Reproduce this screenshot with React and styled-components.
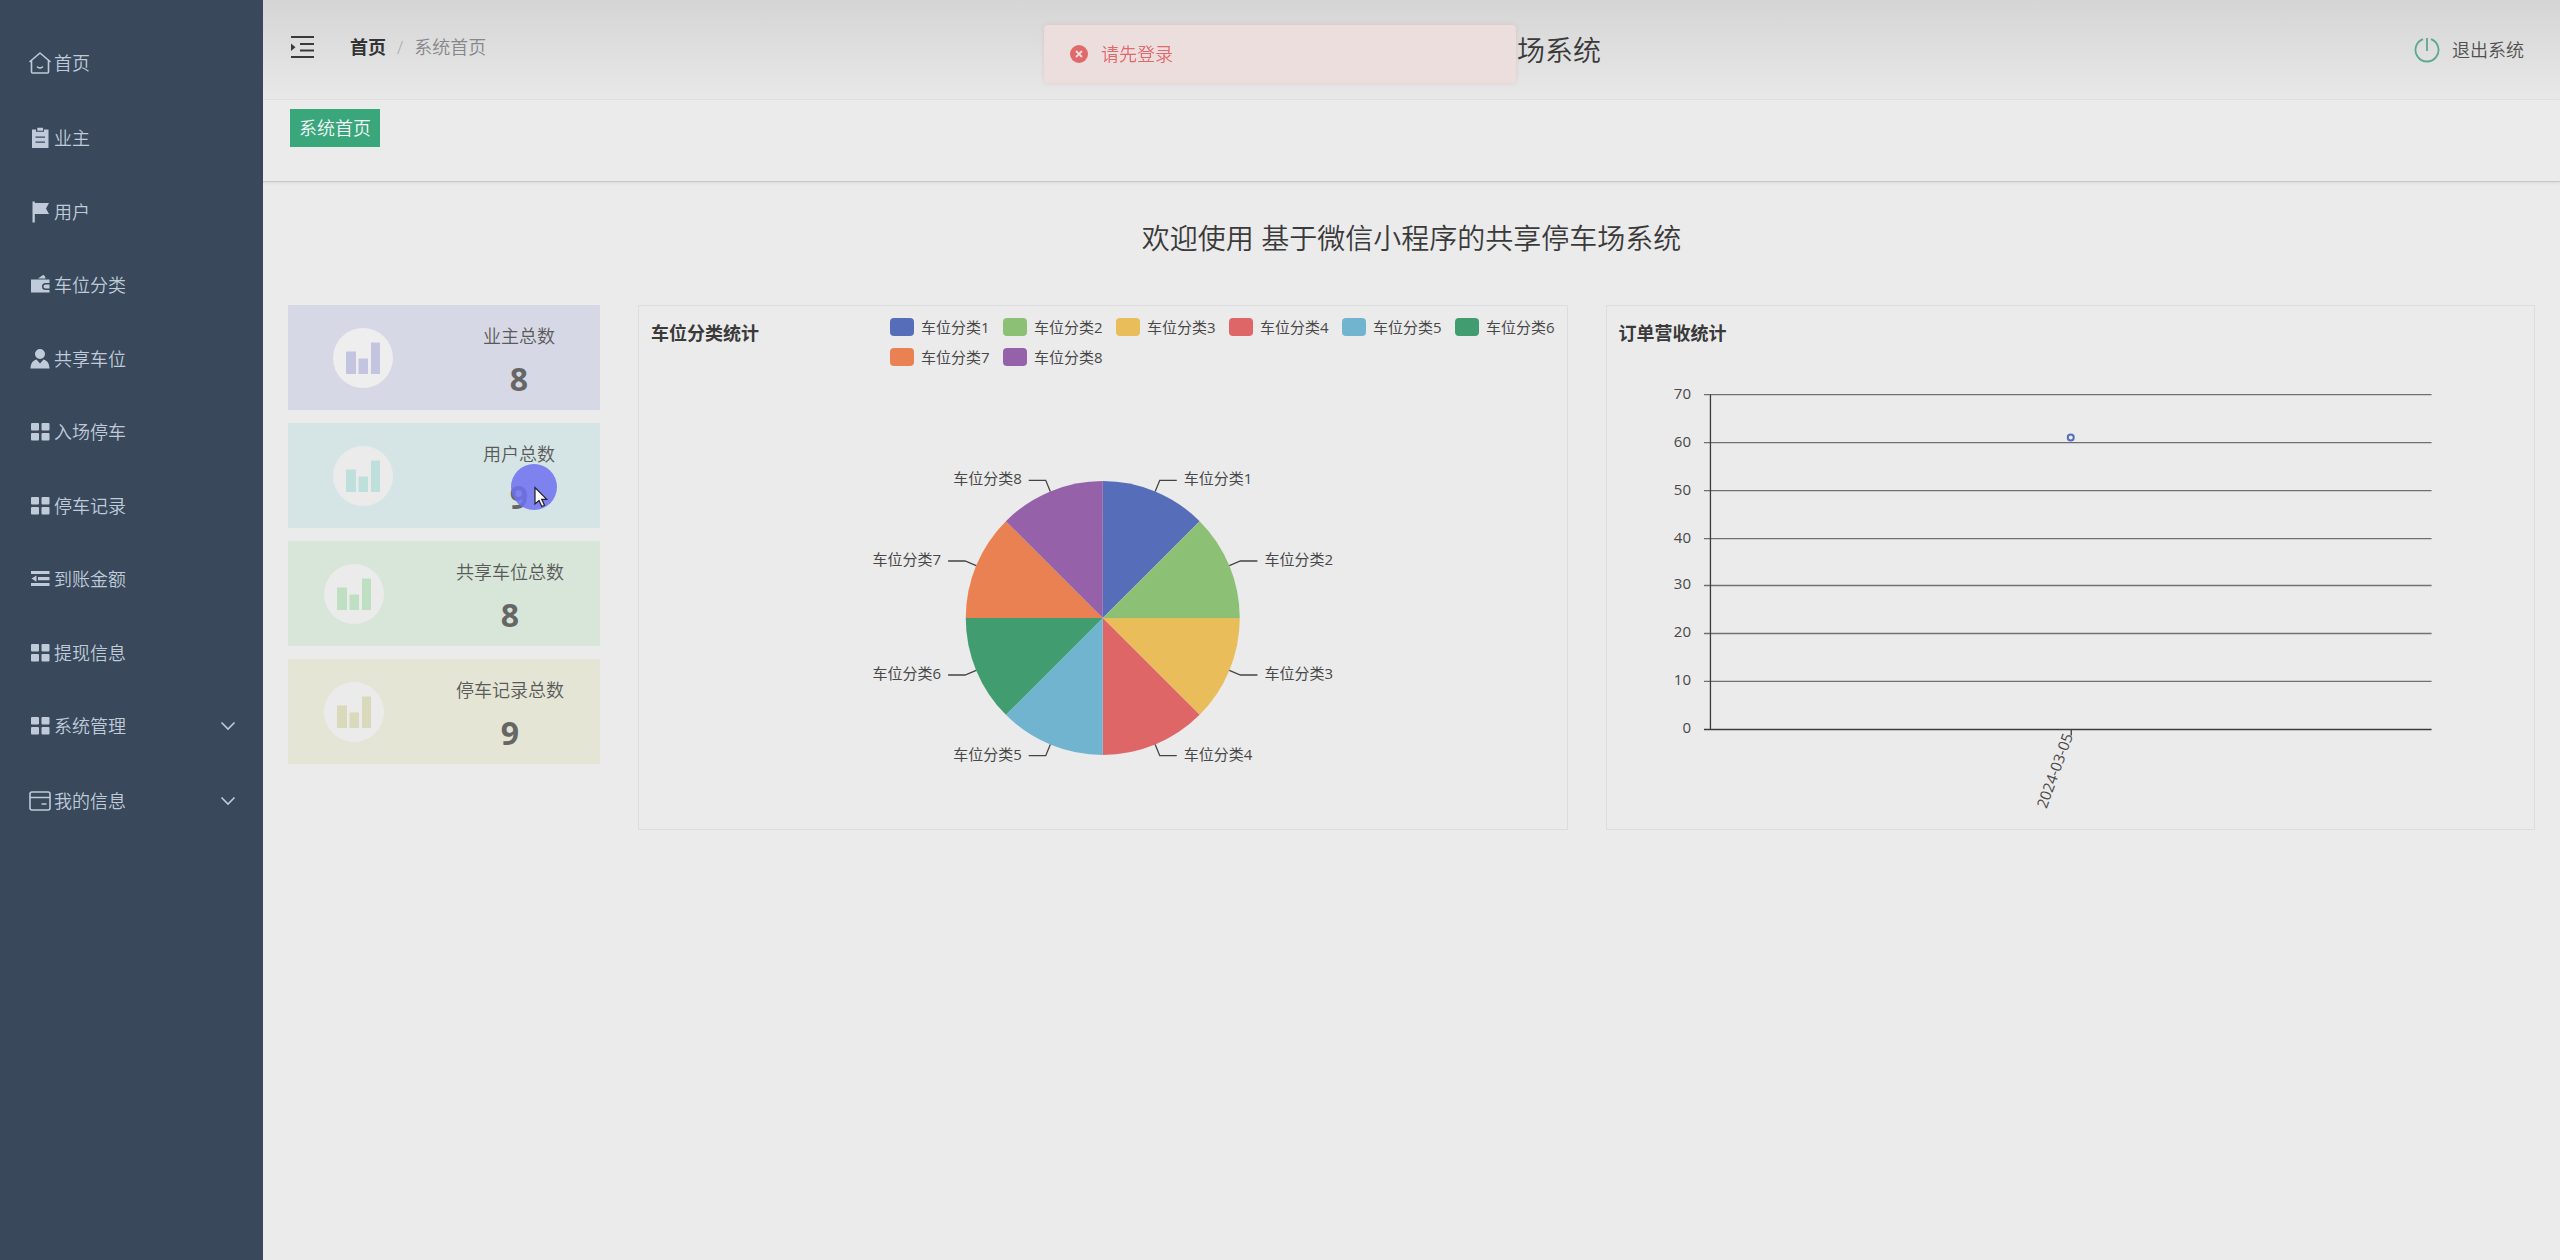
import React from "react";
import styled, { createGlobalStyle } from "styled-components";

const GlobalStyle = createGlobalStyle`
  * { box-sizing: border-box; }
  body {
    margin: 0;
    background: #ebebeb;
    color: #3a3a3a;
    font-family: "Open Sans", "Noto Sans CJK SC", sans-serif;
    font-size: 18px;
    line-height: 24px;
    font-weight: 350;
  }
  button { font: inherit; border: 0; background: none; padding: 0; cursor: pointer; }
  a { color: inherit; text-decoration: none; }
  h1, h2, p, ul, ol { margin: 0; padding: 0; font-weight: inherit; }
  ul, ol { list-style: none; }
`;

const Layout = styled.div`
  display: flex;
  min-height: 100vh;
`;

const Sidebar = styled.nav`
  flex: none;
  width: 263px;
  padding-top: 26px;
  background: #39485b;
  color: #bfcbd9;
`;

const MenuItem = styled.li`
  &:nth-child(even) { padding-bottom: 1px; }
  &:first-child, &:nth-last-child(2) { padding-bottom: 2px; }
`;

const MenuLink = styled.a`
  display: flex;
  align-items: center;
  gap: 3px;
  width: 100%;
  height: 73px;
  padding: 0 27px 0 29px;
  color: inherit;
  white-space: nowrap;
`;

const MenuIcon = styled.svg`
  flex: none;
  width: 22px;
  height: 22px;
`;

const Chevron = styled.svg`
  width: 16px;
  height: 16px;
  margin-left: auto;
`;

const Main = styled.main`
  flex: 1;
  min-width: 0;
`;

const Header = styled.header`
  display: flex;
  align-items: center;
  height: 100px;
  padding: 0 36px 0 27px;
  background: linear-gradient(#d5d5d5, #e8e8e8);
  border-bottom: 1px solid #e2e2e2;
`;

const HeaderSide = styled.div`
  flex: 1;
  display: flex;
  align-items: center;
  justify-content: ${(p) => (p.$end ? "flex-end" : "flex-start")};
  padding-bottom: ${(p) => (p.$end ? "0" : "6px")};
`;

const FoldButton = styled.button`
  display: flex;
  margin-right: 36px;
  color: #3a3a3a;
`;

const Crumbs = styled.ol`
  display: flex;
  gap: 11px;
  color: #85878b;
`;

const Crumb = styled.li`
  color: ${(p) => (p.$sep ? "#a5a8ad" : "inherit")};
`;

const HomeCrumb = styled.a`
  color: #333436;
  font-weight: 700;
`;

const SystemTitle = styled.h1`
  margin-right: 32px;
  font-size: 28px;
  line-height: 40px;
  white-space: nowrap;
`;

const LogoutButton = styled.button`
  display: flex;
  align-items: center;
  gap: 12px;
  color: #505050;
`;

const TagBar = styled.div`
  height: 82px;
  padding: 9px 27px 0;
  border-bottom: 1px solid #c6c7c8;
  box-shadow: 0 1px 3px rgba(0, 0, 0, 0.08);
`;

const Tag = styled.button`
  height: 38px;
  padding: 0 9px;
  background: #3aa67b;
  color: #f4f8f6;
`;

const Content = styled.div`
  padding: 36px 25px;
`;

const Welcome = styled.h2`
  margin-bottom: 47px;
  font-size: 28px;
  line-height: 40px;
  text-align: center;
`;

const Board = styled.div`
  display: grid;
  grid-template-columns: 312px 1fr 1fr;
  gap: 38px;
`;

const Stats = styled.div`
  display: flex;
  flex-direction: column;
  gap: 13px;
`;

const StatCard = styled.section`
  display: flex;
  align-items: center;
  justify-content: space-around;
  height: 105px;
  background: ${(p) => p.$bg};
  color: #5a5a5a;
`;

const StatIcon = styled.svg`
  width: 60px;
  height: 60px;
`;

const StatText = styled.div`
  padding-top: 5px;
  text-align: center;
`;

const StatNumber = styled.p`
  margin-top: 13px;
  color: #666;
  font-size: 32px;
  line-height: 36px;
  font-weight: 700;
`;

const Panel = styled.section`
  height: 525px;
  border: 1px solid #dcdddf;
`;

const PanelHead = styled.div`
  display: flex;
  justify-content: space-between;
  height: 74px;
  padding: 11px 12px 0 12px;
`;

const PanelTitle = styled.h2`
  padding-top: 4px;
  font-size: 18px;
  font-weight: 700;
  white-space: nowrap;
`;

const Legend = styled.ul`
  display: grid;
  grid-template-columns: repeat(6, 100px);
  grid-auto-rows: 20px;
  gap: 10px 13px;
`;

const LegendItem = styled.li`
  display: flex;
  align-items: center;
  gap: 7px;
  color: #484848;
  font-size: 15px;
  font-weight: 400;
  line-height: 20px;
  white-space: nowrap;
`;

const Swatch = styled.span`
  width: 25px;
  height: 18px;
  border-radius: 4px;
  background: ${(p) => p.$color};
`;

const PieSpace = styled.div`
  padding-top: 82px;
`;

const Chart = styled.svg`
  display: block;
  width: 100%;
  overflow: visible;
  text { font-size: 15px; font-weight: 400; fill: #484848; }
`;

const Message = styled.div`
  position: fixed;
  z-index: 10;
  top: 25px;
  left: 50%;
  transform: translateX(-50%);
  display: flex;
  align-items: center;
  gap: 13px;
  width: 472px;
  height: 58px;
  padding: 0 26px;
  border-radius: 4px;
  background: #ebdedd;
  color: #e1696c;
  box-shadow: 0 0 4px rgba(225, 120, 120, 0.25);
`;

const Pointer = styled.svg`
  position: fixed;
  z-index: 20;
  top: 464px;
  left: 511px;
  width: 46px;
  height: 46px;
  pointer-events: none;
`;

const line = { fill: "none", stroke: "currentColor", strokeWidth: 1.6 };

const glyphs = {
  home: (
    <g {...line} strokeLinejoin="round" strokeLinecap="round">
      <path d="M2.500 8.500V20q0 1 1 1h15q1 0 1-1V8.500M1 9.500 11 1l10 8.500" />
      <path d="M8.500 15q2.500 2 5 0" />
    </g>
  ),
  clipboard: (
    <path
      fill="currentColor"
      fillRule="evenodd"
      d="M3 2.500h4v2.300h8V2.500h4.500V21H3zM6.500 9.500v1.300h9.500V9.500zM6.500 14.500v1.300h9.500v-1.300zM8.300 0.800h5.800v3H8.300z"
    />
  ),
  flag: <path fill="currentColor" d="M3.500 0.500h2.300V2H20l-3 5.500 3 5.500H5.800v8.500H3.500z" />,
  wallet: (
    <path
      fill="currentColor"
      fillRule="evenodd"
      d="M2 5.500h18.500v3.500h-4a3.500 3.500 0 0 0 0 7h4v2.500H2zM16.500 10.500h4v4h-4a2 2 0 0 1 0-4zM9 4.500l5-3.500q2 0 2.500 3.500z"
    />
  ),
  user: (
    <path
      fill="currentColor"
      d="M11 1a5 5 0 1 1 0 10 5 5 0 0 1 0-10zM7.500 11.500 11 15.500l3.500-4c4 1 5.800 4 6 9h-19c0.200-5 2-8 6-9z"
    />
  ),
  grid: (
    <g fill="currentColor">
      <rect x="2" y="2" width="8" height="7.500" rx="1" />
      <rect x="12.500" y="2" width="8" height="7.500" rx="1" />
      <rect x="2" y="12" width="8" height="7.500" rx="1" />
      <rect x="12.500" y="12" width="8" height="7.500" rx="1" />
    </g>
  ),
  fold: (
    <path
      fill="currentColor"
      d="M2 3h18.500v3H2zM9 9h11.500v3.300H9zM2 15h18.500v3H2zM2.500 10.600 7.500 7.500v6.200z"
    />
  ),
  card: (
    <g {...line}>
      <rect x="1" y="2" width="20" height="18" rx="2" />
      <path d="M1 7.500h20M12.500 14h5" />
    </g>
  ),
};

const menu = [
  { label: "首页", icon: "home" },
  { label: "业主", icon: "clipboard" },
  { label: "用户", icon: "flag" },
  { label: "车位分类", icon: "wallet" },
  { label: "共享车位", icon: "user" },
  { label: "入场停车", icon: "grid" },
  { label: "停车记录", icon: "grid" },
  { label: "到账金额", icon: "fold" },
  { label: "提现信息", icon: "grid" },
  { label: "系统管理", icon: "grid", sub: true },
  { label: "我的信息", icon: "card", sub: true },
];

const stats = [
  { label: "业主总数", value: 8, bg: "#d7d8e5", bar: "#c3c4e0", disc: "#eeeeee" },
  { label: "用户总数", value: 9, bg: "#d5e5e5", bar: "#bfdfdc", disc: "#ebebeb" },
  { label: "共享车位总数", value: 8, bg: "#d7e6d8", bar: "#bfdfc3", disc: "#ebebeb" },
  { label: "停车记录总数", value: 9, bg: "#e4e5d5", bar: "#d9dabc", disc: "#ebebeb" },
];

const categories = [
  "#566dba", "#8cc175", "#e8bd5a", "#df6667",
  "#71b4cf", "#419c70", "#ea8152", "#9562aa",
].map((color, i) => ({ color, name: `车位分类${i + 1}` }));

const R = 137;
const CX = 230;
const CY = 156;
const polar = (deg, r) => {
  const a = (deg * Math.PI) / 180;
  return [CX + r * Math.sin(a), CY - r * Math.cos(a)];
};

function PieChart() {
  return (
    <Chart height="312" viewBox="0 0 460 312" role="img" aria-label="车位分类统计">
      {categories.map(({ color, name }, i) => {
        const [x1, y1] = polar(i * 45, R);
        const [x2, y2] = polar(i * 45 + 45, R);
        const [sx, sy] = polar(i * 45 + 22.5, R);
        const [ex, ey] = polar(i * 45 + 22.5, R + 12);
        const dir = i < 4 ? 1 : -1;
        return (
          <g key={name}>
            <path d={`M${CX} ${CY}L${x1} ${y1}A${R} ${R} 0 0 1 ${x2} ${y2}Z`} fill={color} />
            <path d={`M${sx} ${sy}L${ex} ${ey}h${dir * 17}`} fill="none" stroke="#444" strokeWidth="1.300" />
            <text x={ex + dir * 24} y={ey + 4} textAnchor={dir > 0 ? "start" : "end"}>{name}</text>
          </g>
        );
      })}
    </Chart>
  );
}

const ticks = [70, 60, 50, 40, 30, 20, 10, 0];

function RevenueChart() {
  const y = (v) => Math.round(349 - (v * 335) / 70) + 0.5;
  return (
    <Chart height="440" viewBox="0 0 928 440" role="img" aria-label="订单营收统计">
      {ticks.map((v) => (
        <g key={v}>
          <line x1="97" x2="825" y1={y(v)} y2={y(v)} stroke={v ? "#707070" : "#3c3c3c"} strokeWidth={v ? 1.3 : 1.6} />
          <text x="84" y={y(v) + 4} textAnchor="end">{v}</text>
        </g>
      ))}
      <path d={`M103.5 ${y(70)}V${y(0)}M464.500 ${y(0)}v6`} stroke="#3c3c3c" strokeWidth="1.300" />
      <circle cx="464" cy={y(61)} r="3" fill="#ebebeb" stroke="#566dba" strokeWidth="2" />
      <text transform="translate(461 356) rotate(-70)" x="2" y="5" textAnchor="end">2024-03-05</text>
    </Chart>
  );
}

export default function App() {
  return (
    <>
      <GlobalStyle />
      <Layout>
        <Sidebar>
          <ul>
            {menu.map(({ label, icon, sub }) => (
              <MenuItem key={label}>
                <MenuLink as={sub ? "button" : "a"} href={sub ? undefined : "#"}>
                  <MenuIcon viewBox="0 0 22 22" aria-hidden="true">{glyphs[icon]}</MenuIcon>
                  {label}
                  {sub && (
                    <Chevron viewBox="0 0 16 16" aria-hidden="true">
                      <path {...line} d="M1.500 4.500 8 11l6.500-6.500" />
                    </Chevron>
                  )}
                </MenuLink>
              </MenuItem>
            ))}
          </ul>
        </Sidebar>
        <Main>
          <Header>
            <HeaderSide>
              <FoldButton aria-label="折叠菜单">
                <svg width="24" height="24" viewBox="0 0 24 24" aria-hidden="true">
                  <path {...line} strokeWidth="1.800" d="M1 2h23M10 9h14M10 15.500h14M1 22h23" />
                  <path d="M1 8.500 5.500 12.300 1 16z" fill="currentColor" />
                </svg>
              </FoldButton>
              <Crumbs>
                <Crumb><HomeCrumb href="#">首页</HomeCrumb></Crumb>
                <Crumb $sep aria-hidden="true">/</Crumb>
                <Crumb>系统首页</Crumb>
              </Crumbs>
            </HeaderSide>
            <SystemTitle>基于微信小程序的共享停车场系统</SystemTitle>
            <HeaderSide $end>
              <LogoutButton>
                <svg width="26" height="26" viewBox="0 0 26 26" fill="none" stroke="#5da890" strokeWidth="1.800" aria-hidden="true">
                  <path d="M9 2.200a11.500 11.500 0 1 0 8 0M13 1v13" />
                </svg>
                退出系统
              </LogoutButton>
            </HeaderSide>
          </Header>
          <TagBar><Tag>系统首页</Tag></TagBar>
          <Content>
            <Welcome>欢迎使用 基于微信小程序的共享停车场系统</Welcome>
            <Board>
              <Stats>
                {stats.map((s) => (
                  <StatCard key={s.label} $bg={s.bg}>
                    <StatIcon viewBox="0 0 60 60" aria-hidden="true">
                      <circle cx="30" cy="30" r="30" fill={s.disc} />
                      <path fill={s.bar} d="M13 23.500h10V46H13zM25.500 30.500h9.500V46h-9.500zM38 14.500h9V46h-9z" />
                    </StatIcon>
                    <StatText>
                      <p>{s.label}</p>
                      <StatNumber>{s.value}</StatNumber>
                    </StatText>
                  </StatCard>
                ))}
              </Stats>
              <Panel>
                <PanelHead>
                  <PanelTitle>车位分类统计</PanelTitle>
                  <Legend>
                    {categories.map((c) => (
                      <LegendItem key={c.name}><Swatch $color={c.color} />{c.name}</LegendItem>
                    ))}
                  </Legend>
                </PanelHead>
                <PieSpace><PieChart /></PieSpace>
              </Panel>
              <Panel>
                <PanelHead><PanelTitle>订单营收统计</PanelTitle></PanelHead>
                <RevenueChart />
              </Panel>
            </Board>
          </Content>
        </Main>
      </Layout>
      <Message role="alert">
        <svg width="18" height="18" viewBox="0 0 18 18" aria-hidden="true">
          <circle cx="9" cy="9" r="9" fill="#e1696c" />
          <path d="M6 6l6 6M12 6l-6 6" stroke="#ebdedd" strokeWidth="1.800" />
        </svg>
        请先登录
      </Message>
      <Pointer viewBox="0 0 46 46" aria-hidden="true">
        <circle cx="23" cy="23" r="23" fill="#6f71f0" fillOpacity="0.860" />
        <path d="M24 23.500v16.500l4-3.500 2.800 6 2.700-1.200-2.800-6h5z" fill="#fff" stroke="#222" strokeWidth="1.200" />
      </Pointer>
    </>
  );
}
